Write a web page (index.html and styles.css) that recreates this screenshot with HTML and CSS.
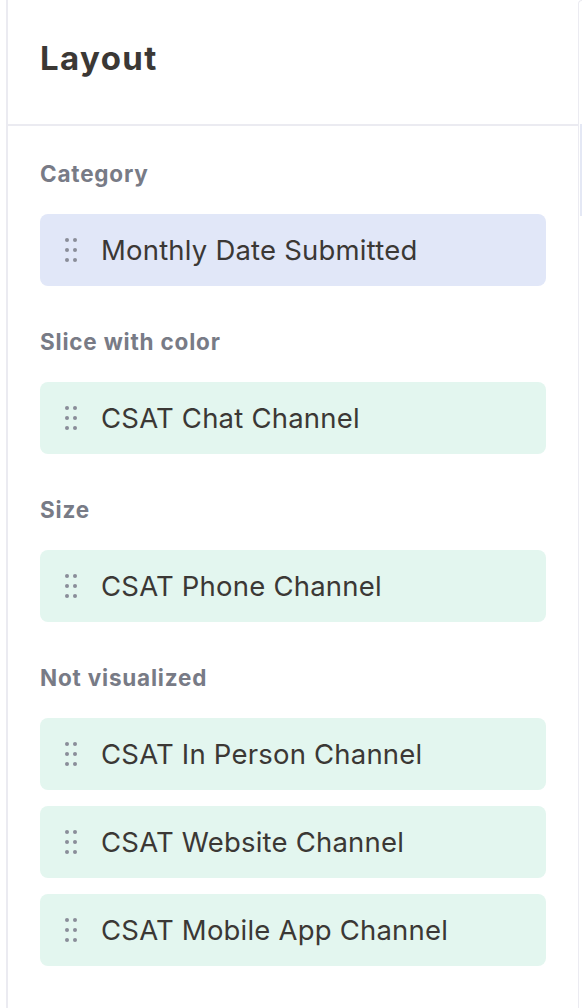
FILE: index.html
```html
<!DOCTYPE html>
<html>
<head>
<meta charset="utf-8">
<link rel="stylesheet" href="styles.css">
</head>
<body>
<div class="app">
  <aside class="panel">
    <header class="panel-header">
      <h1 class="title">Layout</h1>
    </header>
    <div class="panel-body">
      <section class="group">
        <div class="group-label">Category</div>
        <div class="pill pill-blue"><span class="handle"><i></i><i></i><i></i><i></i><i></i><i></i></span><span class="pill-text">Monthly Date Submitted</span></div>
      </section>
      <section class="group">
        <div class="group-label">Slice with color</div>
        <div class="pill pill-green"><span class="handle"><i></i><i></i><i></i><i></i><i></i><i></i></span><span class="pill-text">CSAT Chat Channel</span></div>
      </section>
      <section class="group">
        <div class="group-label">Size</div>
        <div class="pill pill-green"><span class="handle"><i></i><i></i><i></i><i></i><i></i><i></i></span><span class="pill-text">CSAT Phone Channel</span></div>
      </section>
      <section class="group">
        <div class="group-label">Not visualized</div>
        <div class="pill-list">
          <div class="pill pill-green"><span class="handle"><i></i><i></i><i></i><i></i><i></i><i></i></span><span class="pill-text">CSAT In Person Channel</span></div>
          <div class="pill pill-green"><span class="handle"><i></i><i></i><i></i><i></i><i></i><i></i></span><span class="pill-text">CSAT Website Channel</span></div>
          <div class="pill pill-green"><span class="handle"><i></i><i></i><i></i><i></i><i></i><i></i></span><span class="pill-text">CSAT Mobile App Channel</span></div>
        </div>
      </section>
    </div>
  </aside>
  <div class="side">
    <div class="side-thumb"></div>
  </div>
</div>
</body>
</html>
```
FILE: styles.css
```css
* { box-sizing: border-box; }
html, body {
  margin: 0;
  padding: 0;
  background: #ffffff;
  font-family: Inter, "Noto Sans", sans-serif;
}
.app {
  display: flex;
  height: 1008px;
  padding-left: 6px;
  overflow: hidden;
}
.panel {
  width: 572px;
  flex: none;
  border-left: 2px solid #ebebf1;
  display: flex;
  flex-direction: column;
}
.panel-header {
  height: 126px;
  border-bottom: 2px solid #ebebf1;
  display: flex;
  align-items: center;
  padding: 0 32px;
}
.title {
  margin: 0;
  font-size: 33px;
  font-weight: 700;
  color: #3b3835;
  letter-spacing: 1.4px;
  padding-bottom: 8px;
}
.panel-body {
  padding: 32px 32px 0 32px;
  display: flex;
  flex-direction: column;
  gap: 40px;
}
.group {
  display: flex;
  flex-direction: column;
  gap: 24px;
}
.group-label {
  height: 32px;
  line-height: 32px;
  font-size: 22.5px;
  font-weight: 700;
  color: #787b86;
  letter-spacing: 0.8px;
}
.pill-list {
  display: flex;
  flex-direction: column;
  gap: 16px;
}
.pill {
  height: 72px;
  border-radius: 8px;
  display: flex;
  align-items: center;
  padding-left: 25px;
  gap: 24px;
}
.pill-blue { background: #e1e7f8; }
.pill-green { background: #e3f6ef; }
.handle {
  display: grid;
  grid-template-columns: 4px 4px;
  grid-auto-rows: 4px;
  column-gap: 4px;
  row-gap: 6px;
}
.handle i {
  display: block;
  width: 4px;
  height: 4px;
  border-radius: 50%;
  background: #8a8d99;
}
.pill-text {
  font-size: 27.5px;
  color: #3b3835;
  line-height: 32px;
  letter-spacing: 0.2px;
}
.side {
  flex: 1;
  position: relative;
  border-left: 1px solid #ebebf1;
  border-top: 1px solid #ebebf1;
  border-top-left-radius: 8px;
}
.side-thumb {
  position: absolute;
  left: 1px;
  top: 123px;
  width: 3px;
  height: 92px;
  background: #e4e8f5;
}
```
